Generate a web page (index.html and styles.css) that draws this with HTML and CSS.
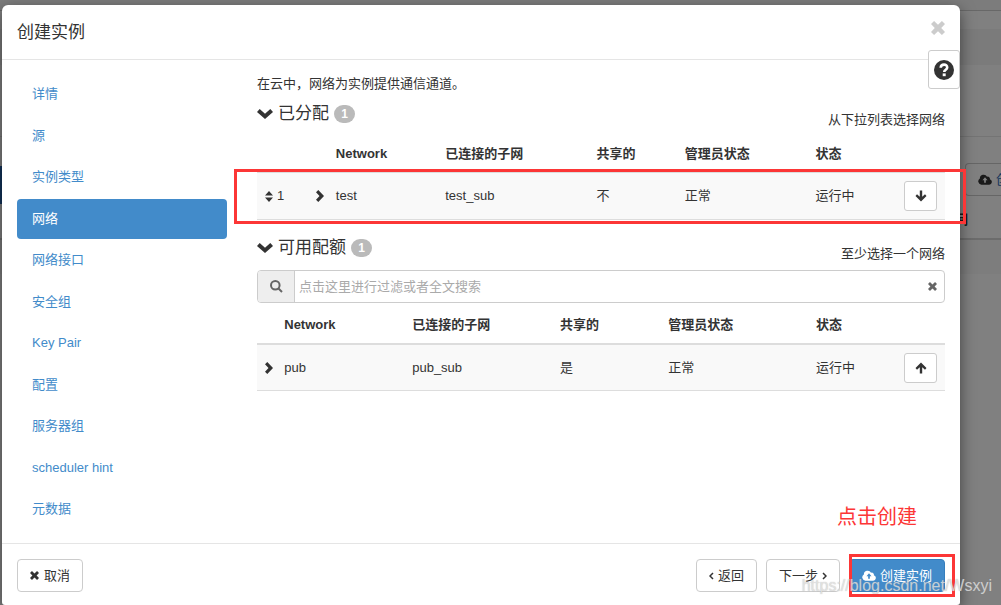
FILE: index.html
```html
<!DOCTYPE html>
<html lang="zh-CN">
<head>
<meta charset="utf-8">
<title>创建实例</title>
<link rel="stylesheet" href="styles.css">
</head>
<body>
<svg class="defs" width="0" height="0" aria-hidden="true">
  <symbol id="x" viewBox="0 0 10 10"><path d="M2.200 0 5 2.700 7.800 0 10 2.200 7.300 5 10 7.800 7.800 10 5 7.300 2.200 10 0 7.800 2.700 5 0 2.200z"/></symbol>
  <symbol id="down" viewBox="0 0 16 10"><path d="M0 3 2.700 0 8 4.800 13.300 0 16 3 8 10z"/></symbol>
  <symbol id="right" viewBox="0 0 8 12"><path d="M0 2.300 2.300 0 8 6 2.300 12 0 9.700 3.500 6z"/></symbol>
  <symbol id="cloud" viewBox="0 0 15 11"><path fill-rule="evenodd" d="M3.500 11A3.500 3.500 0 0 1 2 4.500 4.100 4.100 0 0 1 9.700 2.500 2.300 2.300 0 0 1 12.700 5.300 2.900 2.900 0 0 1 12 11zM7.500 3.200 4.800 6.200H6.600V9H8.400V6.200H10.200z"/></symbol>
  <symbol id="arrow" viewBox="0 0 12 12"><path d="M6 .5 11.500 6 10 7.700 7.200 5.200V11.500H4.800V5.200L2 7.700 .5 6z"/></symbol>
</svg>
<div class="page">
  <div class="backdrop" aria-hidden="true">
    <div class="bg-top"></div>
    <div class="bg-bar"></div>
    <div class="bg-title"></div>
    <div class="bg-space"></div>
    <div class="bg-tools"><span class="bg-button"><svg width="14" height="11"><use href="#cloud"/></svg>创</span></div>
    <div class="bg-head">间</div>
    <div class="bg-row"></div>
    <div class="bg-side"></div>
  </div>

  <main class="modal">
    <header class="modal-header">
      <h1>创建实例</h1>
      <button class="close" aria-label="关闭"><svg width="14" height="14"><use href="#x"/></svg></button>
      <button class="help" aria-label="帮助"><svg width="20" height="20" viewBox="0 0 20 20"><circle cx="10" cy="10" r="10"/><path class="q" d="M6.700 7.800C6.800 3.600 13.300 3.700 13.200 7.500 13.200 9.700 10.200 9.700 10.200 12"/><path class="dot" d="M8.700 13.400h3v2.800h-3z"/></svg></button>
    </header>

    <div class="modal-body">
      <nav class="steps">
        <a href="#">详情</a>
        <a href="#">源</a>
        <a href="#">实例类型</a>
        <a href="#" class="active" aria-current="step">网络</a>
        <a href="#">网络接口</a>
        <a href="#">安全组</a>
        <a href="#">Key Pair</a>
        <a href="#">配置</a>
        <a href="#">服务器组</a>
        <a href="#">scheduler hint</a>
        <a href="#">元数据</a>
      </nav>

      <section class="content">
        <p class="intro">在云中，网络为实例提供通信通道。</p>

        <div class="section-head">
          <h2><svg width="16" height="10"><use href="#down"/></svg>已分配<span class="badge">1</span></h2>
          <span class="hint">从下拉列表选择网络</span>
        </div>
        <div class="allocated">
          <table>
            <colgroup><col class="a-order"><col class="a-toggle"><col class="a-name"><col class="a-subnet"><col class="a-shared"><col class="a-admin"><col class="a-status"><col class="a-action"></colgroup>
            <thead><tr><th></th><th></th><th>Network</th><th>已连接的子网</th><th>共享的</th><th>管理员状态</th><th>状态</th><th></th></tr></thead>
            <tbody><tr>
              <td><span class="order"><svg width="8" height="11" viewBox="0 0 8 11"><path d="M4 0 8 4.500H0zM0 6.500H8L4 11z"/></svg>1</span></td>
              <td class="toggle"><svg width="8" height="12"><use href="#right"/></svg></td>
              <td>test</td><td>test_sub</td><td>不</td><td>正常</td><td>运行中</td>
              <td><button class="move" aria-label="移除"><svg class="flip" width="12" height="12"><use href="#arrow"/></svg></button></td>
            </tr></tbody>
          </table>
          <div class="mark mark-row"></div>
        </div>

        <div class="section-head available-head">
          <h2><svg width="16" height="10"><use href="#down"/></svg>可用配额<span class="badge">1</span></h2>
          <span class="hint">至少选择一个网络</span>
        </div>
        <div class="search">
          <span class="addon"><svg width="13" height="13" viewBox="0 0 13 13"><circle cx="5.300" cy="5.300" r="4.300"/><path d="M8.500 8.500 12 12"/></svg></span>
          <input type="text" aria-label="过滤" placeholder="点击这里进行过滤或者全文搜索">
          <button class="clear" aria-label="清除"><svg width="9" height="9"><use href="#x"/></svg></button>
        </div>
        <table class="available">
          <colgroup><col class="b-toggle"><col class="b-name"><col class="b-subnet"><col class="b-shared"><col class="b-admin"><col class="b-status"><col class="b-action"></colgroup>
          <thead><tr><th></th><th>Network</th><th>已连接的子网</th><th>共享的</th><th>管理员状态</th><th>状态</th><th></th></tr></thead>
          <tbody><tr>
            <td class="toggle"><svg width="8" height="12"><use href="#right"/></svg></td>
            <td>pub</td><td>pub_sub</td><td>是</td><td>正常</td><td>运行中</td>
            <td><button class="move" aria-label="分配"><svg width="12" height="12"><use href="#arrow"/></svg></button></td>
          </tr></tbody>
        </table>
      </section>
    </div>

    <footer class="modal-footer">
      <button class="btn cancel"><svg width="9" height="9"><use href="#x"/></svg>取消</button>
      <button class="btn step"><svg class="angle" width="5" height="8" viewBox="0 0 5 8"><path d="M4 1 1 4 4 7"/></svg>返回</button>
      <button class="btn step">下一步<svg class="angle" width="5" height="8" viewBox="0 0 5 8"><path d="M1 1 4 4 1 7"/></svg></button>
      <div class="create">
        <button class="btn primary"><svg width="14" height="11"><use href="#cloud"/></svg>创建实例</button>
        <div class="mark mark-create"></div>
        <div class="note">点击创建</div>
      </div>
    </footer>
  </main>
  <div class="watermark">https://blog.csdn.net/Wsxyi</div>
</div>
</body>
</html>
```
FILE: styles.css
```css
* { box-sizing: border-box; }

body {
  margin: 0;
  background: #808080;
  color: #333;
  font: 13px/20px "Liberation Sans", "Noto Sans CJK SC", sans-serif;
}

h1, h2, p { margin: 0; font-weight: 400; }
button, input { font: inherit; color: inherit; }
button { cursor: pointer; }
svg { fill: currentColor; flex: none; }
.defs { position: absolute; }

.page {
  position: relative;
  display: flex;
  min-height: 100vh;
  padding: 5px 41px 0 2px;
  overflow: hidden;
}

/* Dimmed page behind the dialog */
.backdrop { position: absolute; inset: 0; color: #1a1a1a; }
.bg-top { height: 11px; background: #7c7c7c; border-bottom: 1px solid #686868; }
.bg-bar { height: 18px; }
.bg-title { height: 36px; background: #7b7b7b; }
.bg-space { height: 72px; border-bottom: 1px solid #747474; }
.bg-tools { display: flex; justify-content: flex-end; height: 68px; padding-top: 26px; }
.bg-button {
  display: flex;
  align-items: center;
  gap: 4px;
  width: 36px;
  height: 33px;
  padding-left: 12px;
  border: 1px solid #666;
  border-right: 0;
  border-radius: 4px 0 0 4px;
  overflow: hidden;
  white-space: nowrap;
  color: #12335a;
}
.bg-button svg { color: #1a1a1a; }
.bg-head {
  height: 35px;
  padding: 5px 33px 0 0;
  border-bottom: 2px solid #6c6c6c;
  text-align: right;
  font-weight: 700;
}
.bg-row { height: 34px; background: #7d7d7d; }
.bg-side { position: absolute; left: 0; top: 166px; width: 8px; height: 38px; background: #12335a; }

.modal {
  position: relative;
  flex: 1;
  display: flex;
  flex-direction: column;
  min-width: 0;
  background: #fff;
  border-radius: 6px 6px 3px 3px;
  box-shadow: 0 5px 15px rgba(0, 0, 0, .5);
}

.modal-header {
  position: relative;
  display: flex;
  justify-content: space-between;
  align-items: center;
  height: 55px;
  padding: 0 15px;
  border-bottom: 1px solid #e5e5e5;
}
h1 { padding-top: 2px; font-size: 17px; line-height: 24px; }
.close { display: flex; padding: 0; margin-bottom: 8px; border: 0; background: none; color: #ccc; }
.help {
  position: absolute;
  top: 45px;
  right: 0;
  display: flex;
  align-items: center;
  justify-content: center;
  width: 32px;
  height: 39px;
  padding: 0;
  border: 1px solid #ccc;
  border-radius: 3px;
  background: #fff;
}
.help .q { fill: none; stroke: #fff; stroke-width: 2.600; }
.help .dot { fill: #fff; }

.modal-body { flex: 1; display: flex; gap: 30px; padding: 14px 15px; }

.steps {
  flex: 0 0 210px;
  display: flex;
  flex-direction: column;
  justify-content: space-between;
}
.steps a {
  padding: 10px 15px;
  border-radius: 4px;
  color: #428bca;
  text-decoration: none;
}
.steps .active { background: #428bca; color: #fff; }

.content { flex: 1; min-width: 0; }

.section-head { display: flex; justify-content: space-between; height: 36px; }
.available-head { margin-top: 18px; height: 32px; }
h2 { display: flex; align-items: center; gap: 5px; height: 20px; font-size: 17px; }
.badge {
  min-width: 21px;
  height: 18px;
  border-radius: 9px;
  background: #bababa;
  color: #fff;
  font-size: 12px;
  font-weight: 700;
  line-height: 18px;
  text-align: center;
}
.intro { margin-bottom: 10px; }
.hint { margin-top: 6px; }

table { width: 100%; border-collapse: separate; border-spacing: 0; table-layout: fixed; }
th, td { padding: 0 8px; text-align: left; vertical-align: middle; white-space: nowrap; }
th { height: 32px; padding-bottom: 4px; }
td { height: 48px; background: #f9f9f9; border-top: 1px solid #ddd; border-bottom: 1px solid #ddd; }
th:empty { padding: 0; }
td.toggle { padding-right: 0; }
.toggle svg, .move svg { display: block; }

.allocated { position: relative; }
.a-order { width: 7.4%; }
.a-toggle { width: 2.9%; }
.a-name { width: 15.9%; }
.a-subnet { width: 22%; }
.a-shared { width: 12.8%; }
.a-admin { width: 19%; }
.a-status { width: 12.9%; }
.a-action, .b-action { width: 7.1%; }

.b-toggle { width: 2.8%; }
.b-name { width: 18.6%; }
.b-subnet { width: 21.5%; }
.b-shared { width: 15.7%; }
.b-admin { width: 21.5%; }
.b-status { width: 12.8%; }

.available th { height: 40px; padding: 3px 8px 0; }
.available td { border-top-width: 2px; }

.order { display: flex; align-items: center; gap: 4px; }
.move {
  display: flex;
  align-items: center;
  justify-content: center;
  width: 33px;
  height: 30px;
  padding: 0;
  border: 1px solid #ccc;
  border-radius: 3px;
  background: #fff;
}
.flip { transform: rotate(180deg); }

.search {
  display: flex;
  height: 33px;
  border: 1px solid #ccc;
  border-radius: 4px;
  overflow: hidden;
}
.addon {
  display: flex;
  align-items: center;
  justify-content: center;
  width: 37px;
  background: #eee;
  border-right: 1px solid #ccc;
  color: #666;
}
.addon svg { fill: none; stroke: currentColor; stroke-width: 2; }
.search input { flex: 1; min-width: 0; padding: 0 4px; border: 0; background: none; outline: 0; }
.search input::placeholder { color: #aaa; }
.clear { display: flex; align-items: center; padding: 0 7px; border: 0; background: none; color: #666; }

.modal-footer {
  display: flex;
  gap: 9px;
  padding: 15px 15px 13px;
  border-top: 1px solid #e5e5e5;
}
.btn {
  display: flex;
  align-items: center;
  gap: 5px;
  height: 33px;
  padding: 0 12px;
  border: 1px solid #ccc;
  border-radius: 4px;
  background: #fff;
  white-space: nowrap;
}
.cancel { margin-right: auto; }
.step { gap: 4px; }
.angle { fill: none; stroke: currentColor; stroke-width: 1.500; }
.primary { gap: 4px; border-color: #357ebd; background: #428bca; color: #fff; }
.create { position: relative; }

/* Hand-drawn annotations over the dialog */
.mark { position: absolute; border: 3px solid #fc3636; pointer-events: none; }
.mark-row { left: -23px; right: -21px; bottom: -4px; height: 55px; }
.mark-create { inset: -5px -10px -5px 0; }
.note {
  position: absolute;
  left: -12px;
  bottom: 60px;
  color: #fc3636;
  font-size: 20px;
  line-height: 30px;
  white-space: nowrap;
}
.watermark {
  position: absolute;
  right: 9px;
  bottom: 9px;
  color: rgba(240, 240, 240, .7);
  font-size: 16px;
  text-shadow: 0 0 1px rgba(130, 130, 130, .6);
  pointer-events: none;
}
```
